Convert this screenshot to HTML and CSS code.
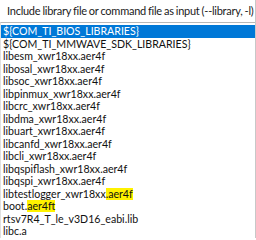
FILE: index.html
```html
<!DOCTYPE html>
<html>
<head>
<meta charset="utf-8">
<link rel="stylesheet" href="styles.css">
</head>
<body>
<div class="panel">
  <div class="header"><span class="header-text">Include library file or command file as input (--library, -l)</span></div>
  <ul class="list">
    <li class="row selected">${COM_TI_BIOS_LIBRARIES}</li>
    <li class="row">${COM_TI_MMWAVE_SDK_LIBRARIES}</li>
    <li class="row">libesm_xwr18xx.aer4f</li>
    <li class="row">libosal_xwr18xx.aer4f</li>
    <li class="row">libsoc_xwr18xx.aer4f</li>
    <li class="row">libpinmux_xwr18xx.aer4f</li>
    <li class="row">libcrc_xwr18xx.aer4f</li>
    <li class="row">libdma_xwr18xx.aer4f</li>
    <li class="row">libuart_xwr18xx.aer4f</li>
    <li class="row">libcanfd_xwr18xx.aer4f</li>
    <li class="row">libcli_xwr18xx.aer4f</li>
    <li class="row">libqspiflash_xwr18xx.aer4f</li>
    <li class="row">libqspi_xwr18xx.aer4f</li>
    <li class="row">libtestlogger_xwr18xx<span class="mark">.aer4f</span></li>
    <li class="row">boot.<span class="mark">aer4ft</span></li>
    <li class="row">rtsv7R4_T_le_v3D16_eabi.lib</li>
    <li class="row">libc.a</li>
  </ul>
</div>
</body>
</html>
```
FILE: styles.css
```css
html, body {
  margin: 0;
  padding: 0;
  background: #ffffff;
}
body {
  width: 256px;
  height: 240px;
  overflow: hidden;
  font-family: "Lato", "Noto Sans", sans-serif;
  font-size: 10.6px;
  color: #111111;
}
.panel {
  width: 255px;
  border-right: 1px solid #c8c8c8;
}
.header {
  height: 22px;
  line-height: 22px;
  padding-left: 7px;
  white-space: nowrap;
  overflow: hidden;
  color: #1a1a1a;
  font-size: 11px;
  letter-spacing: -0.25px;
  word-spacing: -0.5px;
}
.list {
  list-style: none;
  margin: 0;
  padding: 2px 0 0 0;
  border-top: 1px solid #b8b8b8;
  border-left: 1px solid #e0e0e0;
}
.row {
  height: 12.5px;
  line-height: 12.5px;
  padding-left: 2px;
  white-space: nowrap;
}
.selected {
  background: #0078d7;
  color: #ffffff;
}
.mark {
  background: #fff200;
}
```
